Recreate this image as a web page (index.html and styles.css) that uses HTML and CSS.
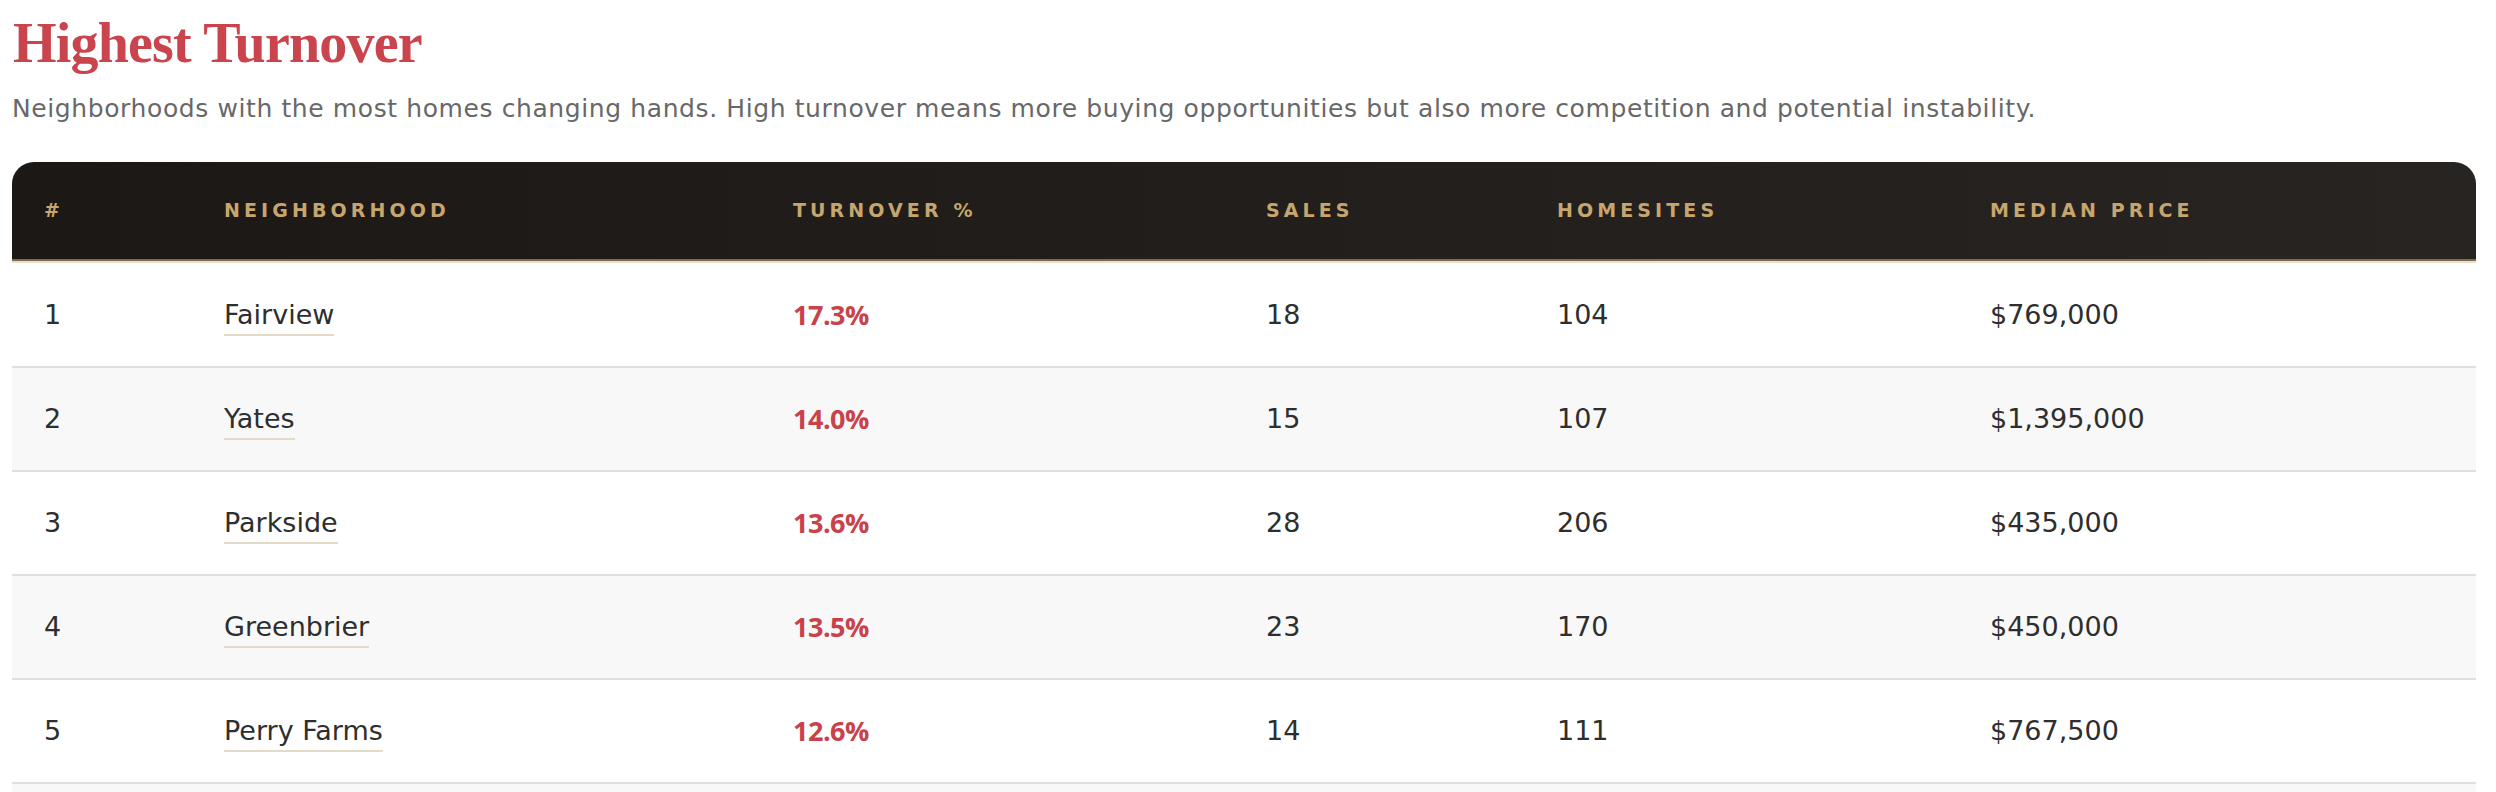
FILE: index.html
```html
<!DOCTYPE html>
<html lang="en">
<head>
<meta charset="utf-8">
<title>Highest Turnover</title>
<link rel="stylesheet" href="styles.css">
</head>
<body>
<section class="section">
  <h2 class="title">Highest Turnover</h2>
  <p class="subtitle">Neighborhoods with the most homes changing hands. High turnover means more buying opportunities but also more competition and potential instability.</p>
  <div class="table-wrap">
    <table class="data">
      <colgroup>
        <col class="c-rank">
        <col class="c-name">
        <col class="c-turn">
        <col class="c-sales">
        <col class="c-home">
        <col class="c-price">
      </colgroup>
      <thead>
        <tr>
          <th>#</th>
          <th>Neighborhood</th>
          <th>Turnover %</th>
          <th>Sales</th>
          <th>Homesites</th>
          <th>Median Price</th>
        </tr>
      </thead>
      <tbody>
        <tr>
          <td>1</td>
          <td><a class="hood" href="#">Fairview</a></td>
          <td class="turn">17.3%</td>
          <td>18</td>
          <td>104</td>
          <td>$769,000</td>
        </tr>
        <tr>
          <td>2</td>
          <td><a class="hood" href="#">Yates</a></td>
          <td class="turn">14.0%</td>
          <td>15</td>
          <td>107</td>
          <td>$1,395,000</td>
        </tr>
        <tr>
          <td>3</td>
          <td><a class="hood" href="#">Parkside</a></td>
          <td class="turn">13.6%</td>
          <td>28</td>
          <td>206</td>
          <td>$435,000</td>
        </tr>
        <tr>
          <td>4</td>
          <td><a class="hood" href="#">Greenbrier</a></td>
          <td class="turn">13.5%</td>
          <td>23</td>
          <td>170</td>
          <td>$450,000</td>
        </tr>
        <tr>
          <td>5</td>
          <td><a class="hood" href="#">Perry Farms</a></td>
          <td class="turn">12.6%</td>
          <td>14</td>
          <td>111</td>
          <td>$767,500</td>
        </tr>
        <tr class="spacer-row" aria-hidden="true">
          <td></td><td></td><td></td><td></td><td></td><td></td>
        </tr>
      </tbody>
    </table>
  </div>
</section>
</body>
</html>
```
FILE: styles.css
```css
html, body {
  margin: 0;
  padding: 0;
  background: #ffffff;
}

body {
  font-family: "DejaVu Sans", "Noto Sans", sans-serif;
  color: #2e2e2e;
}

.section {
  padding: 10px 20px 0 12px;
}

.title {
  margin: 0;
  font-family: "Liberation Serif", "DejaVu Serif", serif;
  font-weight: 700;
  font-size: 56px;
  line-height: 67px;
  letter-spacing: -0.8px;
  color: #c9444d;
  padding-left: 1px;
}

.subtitle {
  margin: 13px 0 0 0;
  font-size: 25px;
  line-height: 37px;
  letter-spacing: 0.6px;
  color: #686868;
}

.table-wrap {
  margin-top: 35px;
  border-radius: 22px 22px 0 0;
  overflow: hidden;
}

.data {
  width: 100%;
  table-layout: fixed;
  border-collapse: separate;
  border-spacing: 0;
}

.c-rank { width: 180px; }
.c-name { width: 569px; }
.c-turn { width: 473px; }
.c-sales { width: 291px; }
.c-home { width: 433px; }
.c-price { width: 518px; }

.data thead {
  background: linear-gradient(90deg, #1b1816 0%, #211e1b 50%, #282421 100%);
}

.data th {
  text-align: left;
  padding: 37px 32px;
  font-size: 19px;
  line-height: 23px;
  font-weight: 700;
  letter-spacing: 4.1px;
  text-transform: uppercase;
  color: #c6a56e;
  border-bottom: 2px solid #7c6b4f;
}

.data td {
  padding: 37px 32px;
  font-size: 27px;
  line-height: 28px;
  color: #2e2e2e;
  border-bottom: 2px solid #dfdfdf;
  white-space: nowrap;
}

.data tbody tr:first-child td {
  border-top: 2px solid #e8dfcc;
  padding-top: 37.5px;
}

.data tbody tr:nth-child(even) td {
  background: #f8f8f8;
}

.hood {
  color: #2e2e2e;
  text-decoration: none;
  border-bottom: 2px solid #e5dac5;
  padding-bottom: 4px;
}

.turn {
  font-family: "Open Sans", "DejaVu Sans", sans-serif;
  font-weight: 700;
}

.data td.turn {
  color: #c8414b;
  letter-spacing: -0.5px;
}

.spacer-row td {
  padding: 20px 32px;
}
```
